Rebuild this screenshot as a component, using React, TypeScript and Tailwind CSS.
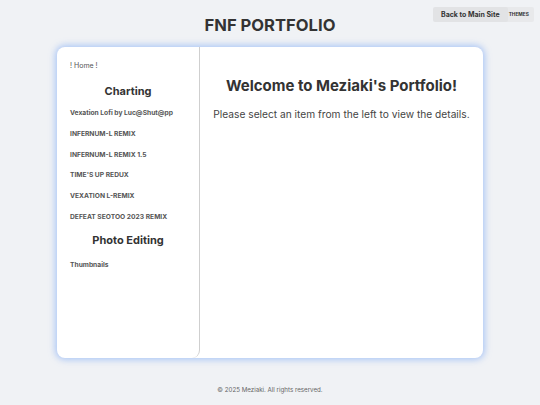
import React from "react";

const items = [
  "Vexation Lofi by Luc@Shut@pp",
  "INFERNUM-L REMIX",
  "INFERNUM-L REMIX 1.5",
  "TIME'S UP REDUX",
  "VEXATION L-REMIX",
  "DEFEAT SEOTOO 2023 REMIX",
];

export default function App() {
  return (
    <div className="relative min-h-[405px] w-full bg-[#f0f2f5] text-[#333] [font-family:Inter,'Noto_Sans',sans-serif]">
      <div className="absolute left-[433px] top-[7px] flex items-center">
        <div className="relative z-10 rounded-[2px] bg-[#e2e3e5] px-[8px] py-[3px] text-[7px] font-bold leading-[9px] text-[#333]">
          Back to Main Site
        </div>
        <div className="-ml-[4px] rounded-[2px] bg-[#e8e9eb] py-[3px] pl-[5px] pr-[5px] text-[4.8px] font-bold leading-[9px] text-[#333]">
          THEMES
        </div>
      </div>
      <header className="flex h-[47px] items-center justify-center pt-[3px]">
        <h1 className="text-[16.6px] font-bold text-[#333]">FNF PORTFOLIO</h1>
      </header>
      <div className="mx-auto flex h-[311px] w-[426px] rounded-[8px] bg-white shadow-[0_0_6px_2px_rgba(120,165,245,0.55)]">
        <aside className="flex w-[143px] flex-col rounded-br-[8px] border-r border-[#cfcfcf] px-[13px] pt-[14px]">
          <div className="text-[7px] leading-[9px] text-[#555]">! Home !</div>
          <h2 className="mt-[14px] text-center text-[11px] font-bold leading-[14px] text-[#333]">Charting</h2>
          <ul className="mt-[11px] flex flex-col gap-[11.8px]">
            {items.map((t) => (
              <li key={t} className="text-[6.7px] font-bold leading-[9px] text-[#555]">{t}</li>
            ))}
          </ul>
          <h2 className="mt-[11px] text-center text-[11px] font-bold leading-[14px] text-[#333]">Photo Editing</h2>
          <div className="mt-[14px] text-[6.7px] font-bold leading-[9px] text-[#555]">Thumbnails</div>
        </aside>
        <main className="flex flex-1 flex-col items-center pt-[29px]">
          <h2 className="text-[15px] font-bold leading-[20px] text-[#333]">Welcome to Meziaki's Portfolio!</h2>
          <p className="mt-[11px] text-[10.2px] leading-[14px] text-[#444]">Please select an item from the left to view the details.</p>
        </main>
      </div>
      <footer className="pt-[27px] text-center text-[6.2px] text-[#666]">© 2025 Meziaki. All rights reserved.</footer>
    </div>
  );
}
